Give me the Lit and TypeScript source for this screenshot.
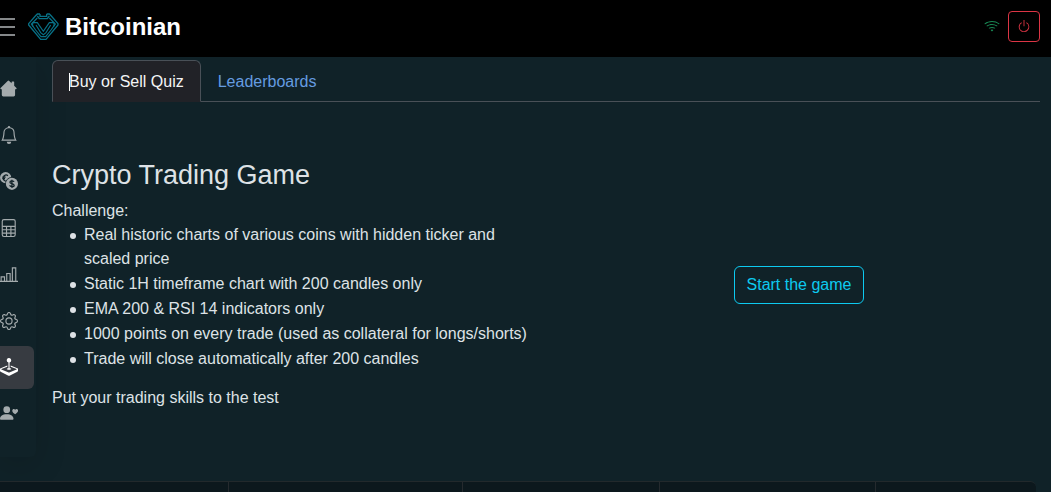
import { LitElement, html, css, svg } from "lit";
import { customElement, state } from "lit/decorators.js";
import { classMap } from "lit/directives/class-map.js";

const house = svg`<path d="M8.200.8a1 1 0 0 0-1.400 0L.5 7.200a.6.6 0 0 0 .4 1h.7v5.200a1.300 1.300 0 0 0 1.300 1.300h9.200a1.300 1.300 0 0 0 1.300-1.300V8.200h.8a.6.6 0 0 0 .4-1L12.600 5.200V1.800a.5.500 0 0 0-.500-.500h-1.300a.500.500 0 0 0-.500.500v1.100z"/>`;
const bell = svg`<path d="M8 16a2 2 0 0 0 2-2H6a2 2 0 0 0 2 2M8 1.918l-.797.161A4 4 0 0 0 4 6c0 .628-.134 2.197-.459 3.742-.16.767-.376 1.566-.663 2.258h10.244c-.287-.692-.502-1.49-.663-2.258C12.134 8.197 12 6.628 12 6a4 4 0 0 0-3.203-3.920zM14.220 12c.223.447.481.801.780 1H1c.299-.199.557-.553.780-1C2.680 10.200 3 6.880 3 6c0-2.420 1.720-4.440 4.005-4.901a1 1 0 1 1 1.990 0A5 5 0 0 1 13 6c0 .880.320 4.200 1.220 6"/>`;
const coins = svg`
  <circle cx="5" cy="5" r="5"/>
  <path d="M7 3.300C5.800 2 3.300 2.500 3 5s2 3.600 3 3M2 4.500h3M2 5.800h2.500" fill="none" stroke="#102127" stroke-width="1.100"/>
  <circle cx="10.600" cy="10.500" r="6" fill="#102127"/>
  <circle cx="10.600" cy="10.500" r="5.400"/>
  <path d="M12.500 8.800c-.4-1.300-3.700-1.300-3.700.2 0 1.900 3.800.9 3.800 2.900 0 1.600-3.600 1.500-4-.1M10.600 6.800v7.400" fill="none" stroke="#102127" stroke-width="1.100"/>`;
const calculator = svg`
  <g fill="none" stroke="currentColor">
    <rect x="2" y=".5" width="11.500" height="15" rx="1.500"/>
    <path d="M2 6.500h11.500M2 9.500h11.500M2 12.500h11.500M5.800 6.500v9M9.700 6.500v9"/>
  </g>`;
const chart = svg`
  <path d="M1 14.500v-4h3v4zm5 0v-7h3v7zm5 0v-12h3v12zM0 14.500h16" fill="none" stroke="currentColor"/>`;
const gear = svg`
  <path d="M8 4.754a3.246 3.246 0 1 0 0 6.492 3.246 3.246 0 0 0 0-6.492M5.754 8a2.246 2.246 0 1 1 4.492 0 2.246 2.246 0 0 1-4.492 0"/>
  <path d="M9.796 1.343c-.527-1.790-3.065-1.790-3.592 0l-.094.319a.873.873 0 0 1-1.255.520l-.292-.160c-1.640-.892-3.433.902-2.540 2.541l.159.292a.873.873 0 0 1-.520 1.255l-.319.094c-1.790.527-1.790 3.065 0 3.592l.319.094a.873.873 0 0 1 .520 1.255l-.160.292c-.892 1.640.901 3.434 2.541 2.540l.292-.159a.873.873 0 0 1 1.255.520l.094.319c.527 1.790 3.065 1.790 3.592 0l.094-.319a.873.873 0 0 1 1.255-.520l.292.160c1.640.893 3.434-.902 2.540-2.541l-.159-.292a.873.873 0 0 1 .520-1.255l.319-.094c1.790-.527 1.790-3.065 0-3.592l-.319-.094a.873.873 0 0 1-.520-1.255l.160-.292c.893-1.640-.902-3.433-2.541-2.540l-.292.159a.873.873 0 0 1-1.255-.520zm-2.633.283c.246-.835 1.428-.835 1.674 0l.094.319a1.873 1.873 0 0 0 2.693 1.115l.291-.160c.764-.415 1.600.420 1.184 1.185l-.159.292a1.873 1.873 0 0 0 1.116 2.692l.318.094c.835.246.835 1.428 0 1.674l-.319.094a1.873 1.873 0 0 0-1.115 2.693l.160.291c.415.764-.420 1.600-1.185 1.184l-.291-.159a1.873 1.873 0 0 0-2.693 1.116l-.094.318c-.246.835-1.428.835-1.674 0l-.094-.319a1.873 1.873 0 0 0-2.692-1.115l-.292.160c-.764.415-1.600-.420-1.184-1.185l.159-.291A1.873 1.873 0 0 0 1.945 8.930l-.319-.094c-.835-.246-.835-1.428 0-1.674l.319-.094A1.873 1.873 0 0 0 3.060 4.377l-.160-.292c-.415-.764.420-1.600 1.185-1.184l.292.159a1.873 1.873 0 0 0 2.692-1.115z"/>`;
const joystick = svg`
  <path d="M10 2a2 2 0 0 1-1.500 1.937v5.087c.863.083 1.500.377 1.500.726 0 .414-.895.750-2 .750s-2-.336-2-.750c0-.350.637-.643 1.500-.726V3.937A2 2 0 1 1 10 2"/>
  <path d="M0 9.665v1.717a1 1 0 0 0 .553.894l6.553 3.277a2 2 0 0 0 1.788 0l6.553-3.277a1 1 0 0 0 .553-.894V9.665c0-.100-.060-.190-.152-.230L9.500 6.715v.993l5.227 2.178a.125.125 0 0 1 .001.230l-5.940 2.546a2 2 0 0 1-1.576 0l-5.940-2.546a.125.125 0 0 1 .001-.230L6.500 7.708l-.013-.988L.152 9.435a.250.250 0 0 0-.152.230"/>`;
const personHeart = svg`
  <circle cx="6" cy="5" r="3"/>
  <path d="M0 13.200C0 11 2.200 9.200 6 9.200s6 1.800 6 4c0 .6-.4.9-1 .9H1c-.6 0-1-.3-1-.9M13.500 5c.8-1.200 2.600-.7 2.600.9 0 1.300-1.200 2.300-2.600 3.300-1.400-1-2.600-2-2.600-3.300 0-1.600 1.800-2.100 2.600-.9"/>`;

const navItems = [
  { label: "Home", icon: house },
  { label: "Alerts", icon: bell },
  { label: "Coins", icon: coins },
  { label: "Calculator", icon: calculator },
  { label: "Charts", icon: chart },
  { label: "Settings", icon: gear },
  { label: "Game", icon: joystick, active: true },
  { label: "Community", icon: personHeart },
];

const tabs = ["Buy or Sell Quiz", "Leaderboards"];

const rules = [
  "Real historic charts of various coins with hidden ticker and scaled price",
  "Static 1H timeframe chart with 200 candles only",
  "EMA 200 & RSI 14 indicators only",
  "1000 points on every trade (used as collateral for longs/shorts)",
  "Trade will close automatically after 200 candles",
];

@customElement("app-root")
export class AppRoot extends LitElement {
  @state() private current = 0;

  static styles = css`
    :host {
      display: flex;
      flex-direction: column;
      height: 100vh;
      overflow: hidden;
      background: #102228;
      color: #dee2e6;
      font: 16px/24px "Liberation Sans", Arial, sans-serif;
    }
    * { box-sizing: border-box; }
    button { font: inherit; cursor: pointer; }
    svg { display: block; fill: currentColor; }
    .header {
      display: flex;
      align-items: center;
      flex: none;
      height: 57px;
      padding: 0 11px 4px 0;
      background: #000;
    }
    .menu {
      display: flex;
      flex-direction: column;
      gap: 6px;
      width: 15px;
      padding: 0;
      border: 0;
      background: none;
    }
    .line { height: 2px; background: #85888a; }
    .brand {
      display: flex;
      align-items: center;
      gap: 6px;
      margin-left: 13px;
      color: #fff;
      font-size: 24px;
      font-weight: 700;
      text-decoration: none;
    }
    .logo { fill: none; stroke: #087187; }
    .status {
      display: flex;
      align-items: center;
      gap: 8px;
      margin-left: auto;
    }
    .wifi { color: #198754; }
    .power {
      display: grid;
      place-items: center;
      width: 32px;
      height: 31px;
      padding: 0;
      border: 1px solid #dc3545;
      border-radius: 4px;
      background: none;
      color: #dc3545;
    }
    .body {
      display: flex;
      align-items: flex-start;
      flex: 1;
      gap: 16px;
      padding-right: 11px;
    }
    .sidebar {
      display: flex;
      flex: none;
      flex-direction: column;
      justify-content: space-between;
      width: 36px;
      height: 400px;
      padding: 10px 2px 22px 0;
      border-radius: 0 0 6px 0;
      box-shadow: 0 8px 32px rgba(0, 0, 0, 0.15);
    }
    .item {
      display: flex;
      align-items: center;
      height: 43px;
      border-radius: 0 6px 6px 0;
      color: #a4abad;
    }
    .item.active { background: #373b41; color: #fff; }
    .main { flex: 1; min-width: 0; padding-top: 3px; }
    .tabs { display: flex; border-bottom: 1px solid #495057; }
    .tab {
      height: 42px;
      margin-bottom: -1px;
      padding: 2px 16px 0;
      border: 1px solid transparent;
      border-radius: 6px 6px 0 0;
      background: none;
      color: #659ce0;
    }
    .tab.active {
      border-color: #495057;
      border-bottom-color: #212227;
      background: #212227;
      color: #f4f5f6;
    }
    .label { position: relative; }
    .caret {
      position: absolute;
      top: 0;
      left: 0;
      width: 1px;
      height: 18px;
      background: #fff;
    }
    .panel {
      display: grid;
      grid-template-columns: 1fr 1fr;
      align-items: center;
      gap: 24px;
      padding-top: 57px;
    }
    .title { margin: 0 0 7px; font-size: 27px; font-weight: 400; line-height: 33px; }
    .text { margin: 0; }
    .rules {
      display: grid;
      gap: 1px;
      margin: 0 0 15px;
      padding: 0;
      list-style: none;
    }
    .rule { display: flex; padding-left: 18px; }
    .rule::before {
      content: "";
      flex: none;
      width: 6px;
      height: 6px;
      margin: 10px 8px 0 0;
      border-radius: 50%;
      background: currentColor;
    }
    .start {
      justify-self: center;
      height: 38px;
      padding: 0 12px;
      border: 1px solid #0dcaf0;
      border-radius: 6px;
      background: none;
      color: #0dcaf0;
    }
    .board {
      display: grid;
      grid-template-columns: 229fr 234fr 197fr 216fr 160fr;
      flex: none;
      height: 11px;
      margin-right: 15px;
      border-top: 1px solid #22292c;
      border-radius: 0 6px 0 0;
      background: #0c181d;
    }
    .cell { border-right: 1px solid #252a2e; }
    .cell:last-child { border-right: 0; }
  `;

  render() {
    return html`
      <header class="header">
        <button class="menu" aria-label="Menu">
          <span class="line"></span><span class="line"></span><span class="line"></span>
        </button>
        <a class="brand" href="#">
          <svg class="logo" width="31" height="28" viewBox="6 9 93 84" aria-hidden="true">
            <path d="M42 12H34l-6 6L8 41v4l36 43h16l36-43v-4L76 18l-6-6h-8M42 12v7h20v-7M34 18l6 8h24l6-8" stroke-width="4"/>
            <path d="M34 24L16 42l6 8M70 24l18 18-6 8" stroke-width="3.500"/>
            <path d="M21 38h13l18 26 18-26h13l2 8-10 14-16 20H45L29 60 19 46zM30 45l14 23 8 6 8-6 14-23" stroke-width="3.500"/>
          </svg>
          <span>Bitcoinian</span>
        </a>
        <div class="status">
          <svg class="wifi" width="16" height="16" viewBox="0 0 16 16" role="img" aria-label="Connected">
            <path d="M15.384 5.115a.485.485 0 0 0-.047-.736A12.440 12.440 0 0 0 8 2C5.259 2 2.723 2.882.663 4.379a.485.485 0 0 0-.048.736.520.520 0 0 0 .668.050A11.450 11.450 0 0 1 8 3c2.507 0 4.827.802 6.716 2.164.205.148.490.130.668-.049"/>
            <path d="M13.229 7.271a.482.482 0 0 0-.063-.745A9.460 9.460 0 0 0 8 5c-1.905 0-3.680.560-5.166 1.526a.480.480 0 0 0-.063.745.525.525 0 0 0 .652.065A8.460 8.460 0 0 1 8 6a8.460 8.460 0 0 1 4.576 1.336c.206.132.480.108.653-.065m-2.183 2.183c.226-.226.185-.605-.100-.750A6.500 6.500 0 0 0 8 8c-1.060 0-2.062.254-2.946.704-.285.145-.326.524-.100.750l.015.015c.160.160.407.190.611.090A5.500 5.500 0 0 1 8 9c.868 0 1.690.201 2.420.560.203.100.450.070.610-.091zM9.060 11.440c.196-.196.198-.520-.040-.660A2 2 0 0 0 8 10.500a2 2 0 0 0-1.020.280c-.238.140-.236.464-.040.660l.706.706a.500.500 0 0 0 .707 0l.707-.707z"/>
          </svg>
          <button class="power" aria-label="Log out">
            <svg width="14" height="14" viewBox="0 1 16 16">
              <path d="M7.500 1v7h1V1z"/>
              <path d="M3 8.812a5 5 0 0 1 2.578-4.375l-.485-.874A6 6 0 1 0 11 3.616l-.501.865A5 5 0 1 1 3 8.812"/>
            </svg>
          </button>
        </div>
      </header>
      <div class="body">
        <nav class="sidebar">
          ${navItems.map(
            (item) => html`<a
              class=${classMap({ item: true, active: !!item.active })}
              href="#"
              aria-label=${item.label}
              ><svg width="18" height="18" viewBox="0 0 16 16" aria-hidden="true">${item.icon}</svg></a
            >`
          )}
        </nav>
        <main class="main">
          <div class="tabs" role="tablist">
            ${tabs.map(
              (name, i) => html`<button
                class=${classMap({ tab: true, active: i === this.current })}
                role="tab"
                aria-selected=${i === this.current ? "true" : "false"}
                @click=${() => (this.current = i)}
              ><span class="label">${i === this.current ? html`<span class="caret"></span>` : ""}${name}</span></button>`
            )}
          </div>
          <section class="panel">
            <div>
              <h1 class="title">Crypto Trading Game</h1>
              <p class="text">Challenge:</p>
              <ul class="rules">
                ${rules.map((rule) => html`<li class="rule"><span>${rule}</span></li>`)}
              </ul>
              <p class="text">Put your trading skills to the test</p>
            </div>
            <button class="start">Start the game</button>
          </section>
        </main>
      </div>
      <div class="board">
        ${[0, 1, 2, 3, 4].map(() => html`<div class="cell"></div>`)}
      </div>
    `;
  }
}
